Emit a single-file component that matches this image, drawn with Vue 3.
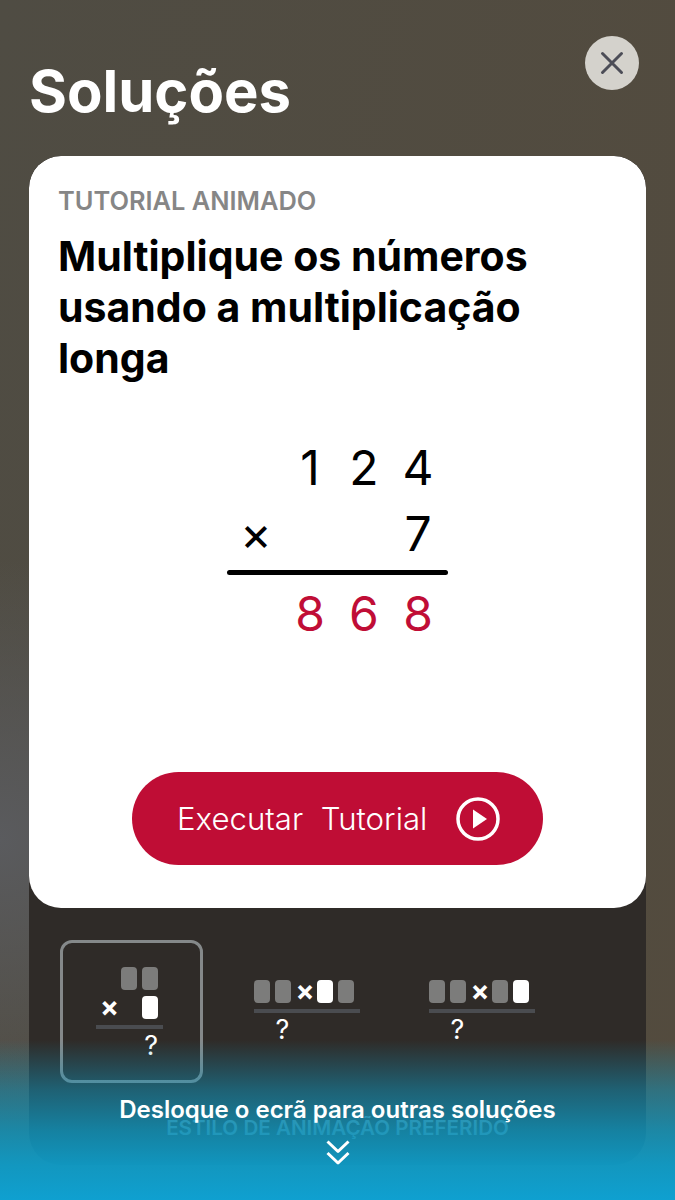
<script setup>
const topRow = ['', '1', '2', '4']
const midRow = ['×', '', '', '7']
const result = ['', '8', '6', '8']
const runLabel = 'Executar  Tutorial'

const wideThumbs = [
  { id: 'a', cells: ['g', 'g', 'x', 'w', 'g'] },
  { id: 'b', cells: ['g', 'g', 'x', 'g', 'w'] }
]
</script>

<template>
  <div class="screen">
    <header class="head">
      <h1 class="page-title">Soluções</h1>
      <button class="close" type="button" aria-label="Fechar">
        <svg width="24" height="24" viewBox="0 0 24 24">
          <path d="M2.5 2.5 L21.5 21.5 M21.5 2.5 L2.5 21.5" stroke="#4c4d57" stroke-width="3" stroke-linecap="round" fill="none" />
        </svg>
      </button>
    </header>

    <section class="panel">
      <div class="card">
        <p class="eyebrow">TUTORIAL ANIMADO</p>
        <h2 class="card-title">Multiplique os números usando a multiplicação longa</h2>

        <div class="math">
          <div class="math-row first">
            <span v-for="(c, i) in topRow" :key="i">{{ c }}</span>
          </div>
          <div class="math-row second">
            <span v-for="(c, i) in midRow" :key="i">{{ c }}</span>
          </div>
          <div class="math-line"></div>
          <div class="math-row answer">
            <span v-for="(c, i) in result" :key="i">{{ c }}</span>
          </div>
        </div>

        <button class="run" type="button">
          <span class="run-label">{{ runLabel }}</span>
          <svg width="44" height="44" viewBox="0 0 44 44">
            <circle cx="22" cy="22" r="20" stroke="#fff" stroke-width="3.5" fill="none" />
            <path d="M17 12.5 L31 22 L17 31.5 Z" fill="#fff" />
          </svg>
        </button>
      </div>

      <div class="thumbs">
        <div class="thumb selected">
          <div class="stack">
            <div class="stack-row">
              <i class="cell"></i>
              <i class="cell"></i>
            </div>
            <div class="stack-row lower">
              <b class="times">×</b>
              <i class="cell white"></i>
            </div>
            <div class="rule"></div>
            <div class="q q-right">?</div>
          </div>
        </div>
        <div v-for="t in wideThumbs" :key="t.id" class="thumb">
          <div class="inline">
            <div class="inline-row">
              <template v-for="(c, i) in t.cells" :key="i">
                <b v-if="c === 'x'" class="times">×</b>
                <i v-else class="cell" :class="{ white: c === 'w' }"></i>
              </template>
            </div>
            <div class="rule"></div>
            <div class="q q-left">?</div>
          </div>
        </div>
      </div>

      <p class="pref">ESTILO DE ANIMAÇÃO PREFERIDO</p>
    </section>

    <div class="scroll-hint">
      <p class="hint-text">Desloque o ecrã para outras soluções</p>
      <svg width="24" height="25" viewBox="0 0 24 25">
        <path d="M1.5 1.5 L12 11.5 L22.5 1.5 M1.5 13 L12 23 L22.5 13" stroke="#fff" stroke-width="3" fill="none" stroke-linejoin="round" />
      </svg>
    </div>
  </div>
</template>

<style>
html, body {
  margin: 0;
  background: #514b40;
}
</style>

<style scoped>
.screen {
  position: relative;
  width: 675px;
  height: 1200px;
  overflow: hidden;
  font-family: Inter, "Liberation Sans", sans-serif;
  background:
    radial-gradient(circle at 0 840px, #5a5b5e 0, rgba(90, 91, 94, 0) 280px),
    linear-gradient(100deg, #4f4c43, #534b3e);
}

.head {
  height: 156px;
  box-sizing: border-box;
  padding: 36px 36px 0 29px;
  display: flex;
  justify-content: space-between;
  align-items: flex-start;
}

.page-title {
  margin: 21px 0 0;
  font-size: 58px;
  line-height: 68px;
  font-weight: 700;
  color: #fff;
}

.close {
  width: 54px;
  height: 54px;
  padding: 0;
  border: none;
  border-radius: 50%;
  background: #d4d2cc;
  display: flex;
  align-items: center;
  justify-content: center;
}

.panel {
  margin: 0 29px;
  height: 1009px;
  border-radius: 32px;
  background: #2f2b28;
  overflow: hidden;
}

.card {
  height: 752px;
  box-sizing: border-box;
  padding: 30px 29px 43px;
  background: #fff;
  border-radius: 32px;
  display: flex;
  flex-direction: column;
}

.eyebrow {
  margin: 0;
  font-size: 25.4px;
  line-height: 30px;
  font-weight: 600;
  color: #868686;
}

.card-title {
  margin: 15px 0 0;
  font-size: 41px;
  line-height: 51px;
  font-weight: 700;
  color: #000;
}

.math {
  margin: 55px 0 0 169px;
  width: 221px;
  font-size: 48px;
  color: #000;
}

.math-row {
  display: grid;
  grid-template-columns: repeat(4, 54px);
  margin-left: 2px;
  text-align: center;
}

.math-row.first {
  height: 58px;
  line-height: 58px;
}

.math-row.second {
  margin-top: 8px;
  height: 58px;
  line-height: 58px;
}

.math-line {
  margin-top: 7px;
  height: 5px;
  border-radius: 3px;
  background: #000;
}

.math-row.answer {
  margin-top: 10px;
  height: 58px;
  line-height: 58px;
  color: #c00d36;
}

.run {
  margin-top: auto;
  align-self: center;
  width: 411px;
  height: 93px;
  padding: 0 43px 0 45px;
  box-sizing: border-box;
  border: none;
  border-radius: 47px;
  background: #bf0d35;
  color: #fff;
  display: flex;
  align-items: center;
  justify-content: space-between;
  font-family: inherit;
}

.run-label {
  font-size: 31.2px;
  font-weight: 300;
  white-space: pre;
}

.thumbs {
  display: flex;
  gap: 32px;
  padding: 32px 0 0 31px;
}

.thumb {
  width: 143px;
  height: 143px;
  box-sizing: border-box;
  border: 3px solid transparent;
  border-radius: 12px;
  display: flex;
  align-items: center;
  justify-content: center;
}

.thumb.selected {
  border-color: #85898a;
}

.stack {
  width: 67px;
  margin-right: 4px;
  margin-top: 2px;
}

.stack-row {
  display: flex;
  justify-content: flex-end;
  gap: 5px;
  padding-right: 5px;
}

.stack-row.lower {
  margin-top: 6px;
  justify-content: space-between;
  padding-left: 4px;
}

.inline {
  width: 106px;
}

.inline-row {
  display: flex;
  align-items: center;
  gap: 5px;
}

.cell {
  display: block;
  width: 16px;
  height: 23px;
  border-radius: 4px;
  background: #7c7c7b;
}

.cell.white {
  background: #fff;
}

.times {
  width: 16px;
  text-align: center;
  font-size: 28px;
  line-height: 23px;
  font-weight: 700;
  color: #fff;
}

.rule {
  margin-top: 6px;
  height: 4px;
  background: #4a4c50;
}

.q {
  margin-top: 4px;
  font-size: 27px;
  line-height: 26px;
  color: #fff;
}

.q-right {
  text-align: right;
  padding-right: 5px;
}

.q-left {
  padding-left: 22px;
}

.pref {
  margin: 32px 0 0;
  text-align: center;
  font-size: 20.6px;
  line-height: 26px;
  font-weight: 600;
  color: #6f98a5;
}

/* fade over the bottom of the sheet */
.scroll-hint {
  position: absolute;
  left: 0;
  right: 0;
  bottom: 0;
  height: 160px;
  box-sizing: border-box;
  padding-top: 55px;
  display: flex;
  flex-direction: column;
  align-items: center;
  background: linear-gradient(
    to bottom,
    rgba(15, 150, 190, 0),
    rgba(15, 150, 190, 0.5) 31%,
    rgba(15, 150, 190, 0.8) 56%,
    rgba(15, 155, 198, 0.95) 78%,
    rgba(15, 160, 208, 1)
  );
}

.hint-text {
  margin: 0;
  font-size: 24px;
  line-height: 30px;
  font-weight: 600;
  color: #fff;
}

.scroll-hint svg {
  margin-top: 15px;
}
</style>
